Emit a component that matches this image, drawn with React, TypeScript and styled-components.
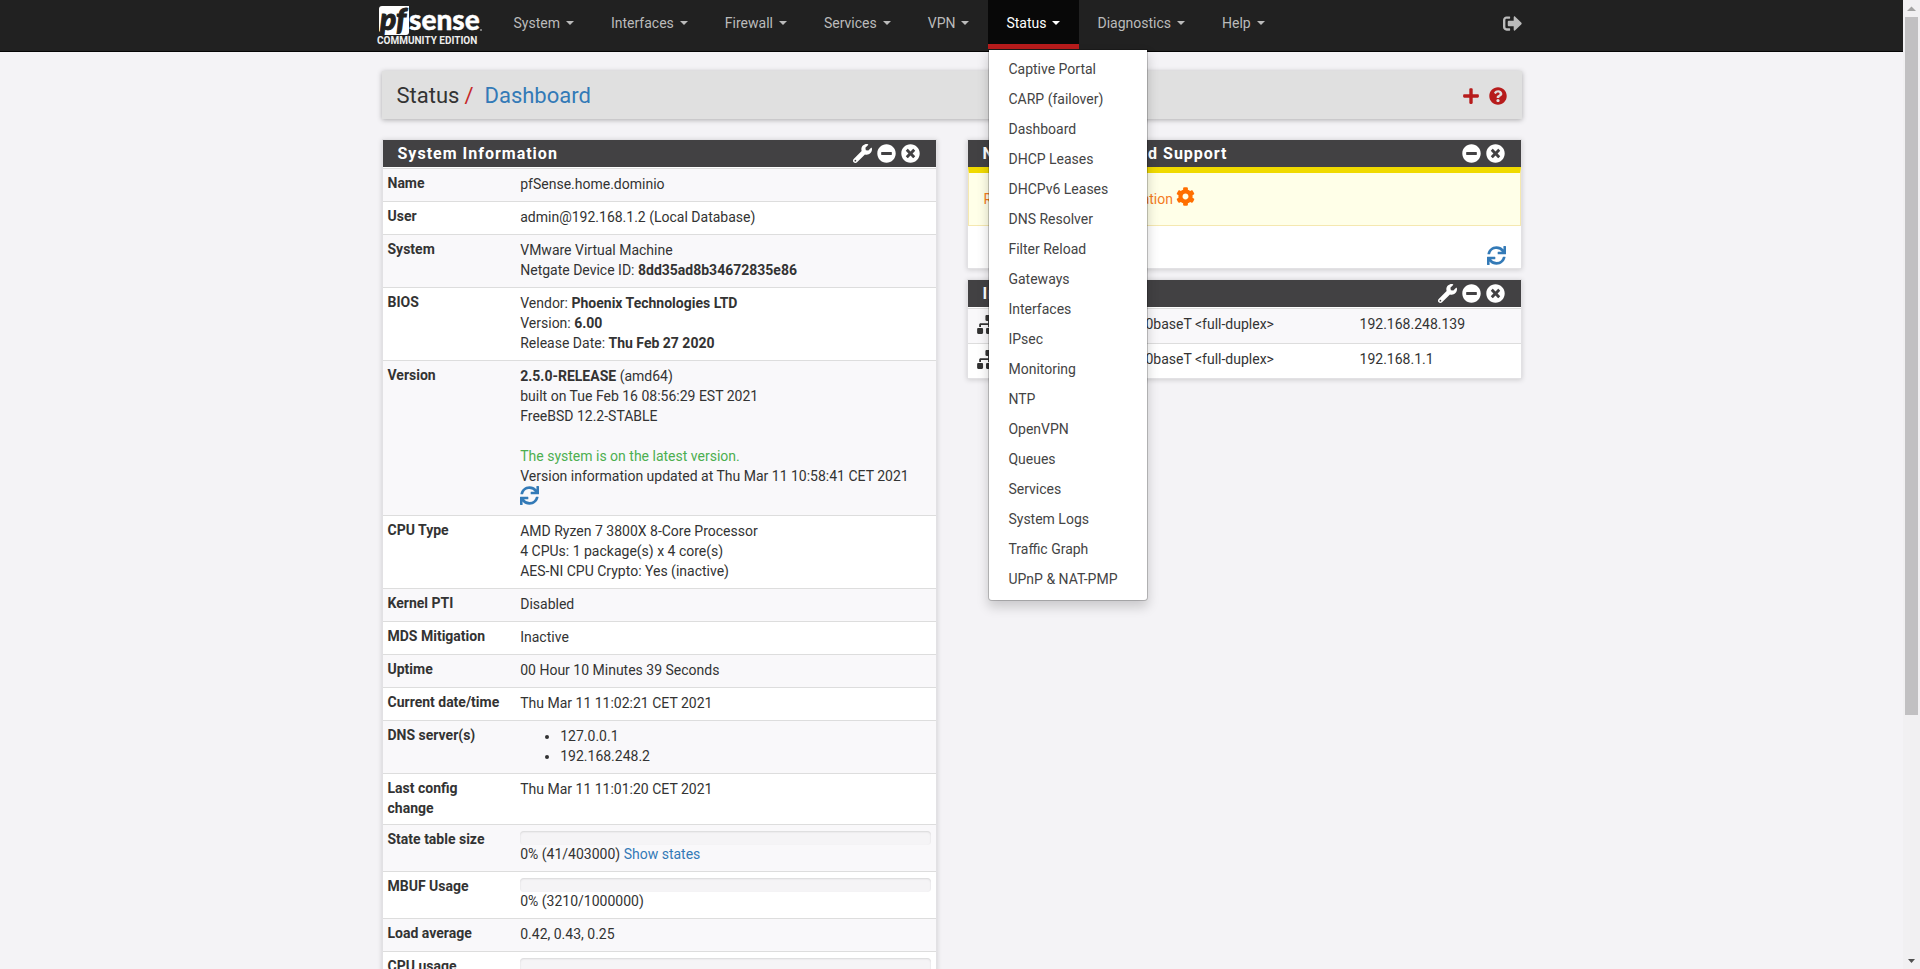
import React from "react";
import styled, { createGlobalStyle } from "styled-components";
import {
  FaCog,
  FaMinusCircle,
  FaPlus,
  FaQuestionCircle,
  FaSignOutAlt,
  FaSitemap,
  FaSync,
  FaTimesCircle,
  FaWrench,
} from "react-icons/fa";

const GlobalStyle = createGlobalStyle`
  *, *::before, *::after { box-sizing: border-box; }
  body {
    margin: 0;
    background: #f4f3f6;
    color: #333;
    font: 14px/20px Roboto, "Liberation Sans", sans-serif;
  }
  a { color: #337ab7; text-decoration: none; }
  button { padding: 0; border: 0; background: none; font: inherit; color: inherit; cursor: pointer; }
`;

const Window = styled.div`
  display: flex;
  height: 100vh;
  overflow: hidden;
`;

const Page = styled.div`
  flex: 1;
  min-width: 0;
  overflow: hidden;
`;

const ScrollTrack = styled.div`
  display: flex;
  flex-direction: column;
  width: 17px;
  padding: 0 2px;
  background: #f1f0f2;
`;

const ScrollArrow = styled.svg`
  width: 13px;
  height: 17px;
  flex: none;
`;

const ScrollThumb = styled.div`
  height: 72%;
  background: #c1c0c2;
`;

const ScrollSpace = styled.div`
  flex: 1;
`;

const NavBar = styled.nav`
  height: 52px;
  background: #212121;
  border-bottom: 1px solid #050505;
`;

const Container = styled.div`
  max-width: 1140px;
  margin: 0 auto;
`;

const NavRow = styled(Container)`
  display: flex;
  align-items: flex-start;
  height: 51px;
`;

const Brand = styled.a`
  flex: none;
  width: 120px;
  margin-left: -6px;
`;

const NavList = styled.ul`
  display: flex;
  flex: 1;
  margin: 0;
  padding: 0;
  list-style: none;
`;

const NavItem = styled.li`
  position: relative;
`;

const NavButton = styled.button<{ $open?: boolean }>`
  display: flex;
  align-items: center;
  gap: 6px;
  height: 49px;
  padding: 0 19px 3px 18px;
  color: ${(p) => (p.$open ? "#fff" : "#bbb")};
  background: ${(p) => (p.$open ? "#080808" : "transparent")};
  box-shadow: ${(p) => (p.$open ? "inset 0 -5px 0 #b71c1c" : "none")};
`;

const Caret = styled.span`
  border: 4px solid transparent;
  border-top-color: currentColor;
  border-bottom: 0;
`;

const Menu = styled.ul`
  position: absolute;
  z-index: 10;
  top: 49px;
  left: 0;
  min-width: 160px;
  margin: 0;
  padding: 5px 0;
  list-style: none;
  background: #fff;
  background-clip: padding-box;
  border: 1px solid rgba(0, 0, 0, 0.2);
  border-radius: 0 0 4px 4px;
  box-shadow: 0 6px 12px rgba(0, 0, 0, 0.175);
`;

const MenuLink = styled.a`
  display: block;
  padding: 4px 19px 6px;
  color: #444;
  white-space: nowrap;
`;

const Logout = styled.button`
  display: flex;
  height: 47px;
  align-items: center;
  color: #bbb;
`;

const PageHeader = styled.header`
  display: flex;
  align-items: center;
  justify-content: space-between;
  height: 48px;
  margin-top: 19px;
  padding: 2px 15px 0;
  background: #e0e0e0;
  box-shadow: 0 1px 5px rgba(0, 0, 0, 0.3);
`;

const Crumbs = styled.h1`
  display: flex;
  gap: 5px;
  margin: 0;
  font-size: 22px;
  font-weight: 400;
  line-height: 30px;
`;

const Slash = styled.span`
  color: #c62828;
  margin-right: 6px;
`;

const HeaderTools = styled.div`
  display: flex;
  gap: 9px;
  color: #b71c1c;
  button { display: flex; }
`;

const Columns = styled.main`
  display: grid;
  grid-template-columns: 1fr 1fr;
  gap: 30px;
  align-items: start;
  margin-top: 20px;
`;

const Stack = styled.div`
  display: grid;
  gap: 10px;
`;

const PanelBox = styled.section`
  background: #fff;
  border: 1px solid #e2e1e4;
  box-shadow: 0 1px 5px rgba(0, 0, 0, 0.16);
`;

const PanelHead = styled.header`
  display: flex;
  align-items: center;
  justify-content: space-between;
  height: 27px;
  padding: 0 16px 0 15px;
  color: #fff;
  background: #424143;
`;

const PanelTitle = styled.h2`
  margin: 0;
  font-size: 16px;
  font-weight: 700;
  letter-spacing: 1px;
`;

const PanelTools = styled.div`
  display: flex;
  gap: 5px;
  button { display: flex; }
`;

const InfoTable = styled.table`
  width: 100%;
  margin-top: 1px;
  border-collapse: separate;
  border-spacing: 0;
  table-layout: fixed;
  tr:nth-child(odd) { background: #f9f8fa; }
  th, td { border-top: 1px solid #ddd; vertical-align: top; text-align: left; }
  th { width: 24%; padding: 4px 15px 6px 5px; }
  td { padding: 5px 5px 7px; }
`;

const Green = styled.span`
  color: #4caf50;
`;

const RefreshButton = styled.button`
  display: block;
  height: 22px;
  margin: -2px 0 2px;
  color: #337ab7;
  svg { display: block; }
`;

const ServerList = styled.ul`
  margin: 0;
  padding-left: 40px;
`;

const Meter = styled.div`
  height: 14px;
  margin-top: 1px;
  margin-bottom: -1px;
  border-radius: 4px;
  background: #f5f4f6;
  box-shadow: inset 0 1px 2px rgba(0, 0, 0, 0.12);
`;

const Alert = styled.div`
  display: flex;
  gap: 3px;
  padding: 16px 15px;
  color: #f57c1f;
  background: #ffffe8;
  border: 1px solid #f5e8b0;
  border-top: 6px solid #f0da00;
  svg { color: #ff6f00; margin-top: -2px; }
`;

const PanelFoot = styled.div`
  display: flex;
  justify-content: flex-end;
  height: 42px;
  padding: 20px 15px 0 0;
`;

const PortTable = styled(InfoTable)`
  td { height: 35px; padding: 5px 5px 9px; }
  td:first-child { padding-left: 9px; }
`;

const PortLink = styled.a`
  display: flex;
  align-items: center;
  gap: 8px;
  height: 20px;
  color: #333;
  font-weight: 700;
  svg { width: 24px; height: 19px; }
`;

const NAV = ["System", "Interfaces", "Firewall", "Services", "VPN", "Status", "Diagnostics", "Help"];

const STATUS_MENU = [
  "Captive Portal", "CARP (failover)", "Dashboard", "DHCP Leases", "DHCPv6 Leases", "DNS Resolver",
  "Filter Reload", "Gateways", "Interfaces", "IPsec", "Monitoring", "NTP", "OpenVPN", "Queues",
  "Services", "System Logs", "Traffic Graph", "UPnP & NAT-PMP",
];

function Logo() {
  return (
    <svg width="114" height="50" viewBox="0 0 114 50" role="img" aria-label="pfSense Community Edition">
      <path d="M6 6H33V32a3 3 0 0 1-3 3H7L3 31V9a3 3 0 0 1 3-3Z" fill="#fff" />
      <text x="4" y="30" fill="#212121" stroke="#212121" strokeWidth="1" fontFamily="Lato, sans-serif" fontWeight="900" fontStyle="italic" fontSize="30">pf</text>
      <text x="33" y="30" fill="#fff" stroke="#fff" strokeWidth="0.4" fontFamily="Lato, sans-serif" fontWeight="900" fontSize="28">sense</text>
      <circle cx="105" cy="30" r="1" fill="#999" />
      <text x="1" y="44" fill="#eee" fontFamily="Roboto, sans-serif" fontWeight="700" fontSize="10">COMMUNITY EDITION</text>
    </svg>
  );
}

type PanelProps = { title: string; settings?: boolean; children: React.ReactNode };

function Panel({ title, settings, children }: PanelProps) {
  return (
    <PanelBox>
      <PanelHead>
        <PanelTitle>{title}</PanelTitle>
        <PanelTools>
          {settings && <button aria-label="Settings"><FaWrench size={19} /></button>}
          <button aria-label="Collapse"><FaMinusCircle size={19} /></button>
          <button aria-label="Close"><FaTimesCircle size={19} /></button>
        </PanelTools>
      </PanelHead>
      {children}
    </PanelBox>
  );
}

const INFO: [string, React.ReactNode][] = [
  ["Name", "pfSense.home.dominio"],
  ["User", "admin@192.168.1.2 (Local Database)"],
  ["System", <>VMware Virtual Machine<br />Netgate Device ID: <b>8dd35ad8b34672835e86</b></>],
  ["BIOS", <>Vendor: <b>Phoenix Technologies LTD</b><br />Version: <b>6.00</b><br />Release Date: <b>Thu Feb 27 2020</b></>],
  ["Version", <>
    <b>2.5.0-RELEASE</b> (amd64)<br />built on Tue Feb 16 08:56:29 EST 2021<br />FreeBSD 12.2-STABLE<br /><br />
    <Green>The system is on the latest version.</Green><br />
    Version information updated at Thu Mar 11 10:58:41 CET 2021
    <RefreshButton aria-label="Refresh version"><FaSync size={19} /></RefreshButton>
  </>],
  ["CPU Type", <>AMD Ryzen 7 3800X 8-Core Processor<br />4 CPUs: 1 package(s) x 4 core(s)<br />AES-NI CPU Crypto: Yes (inactive)</>],
  ["Kernel PTI", "Disabled"],
  ["MDS Mitigation", "Inactive"],
  ["Uptime", "00 Hour 10 Minutes 39 Seconds"],
  ["Current date/time", "Thu Mar 11 11:02:21 CET 2021"],
  ["DNS server(s)", <ServerList><li>127.0.0.1</li><li>192.168.248.2</li></ServerList>],
  ["Last config change", "Thu Mar 11 11:01:20 CET 2021"],
  ["State table size", <><Meter />0% (41/403000) <a href="#states">Show states</a></>],
  ["MBUF Usage", <><Meter />0% (3210/1000000)</>],
  ["Load average", "0.42, 0.43, 0.25"],
  ["CPU usage", <Meter />],
];

const PORTS = [
  ["WAN", "192.168.248.139"],
  ["LAN", "192.168.1.1"],
];

export default function App() {
  return (
    <Window>
      <GlobalStyle />
      <Page>
        <NavBar>
          <NavRow>
            <Brand href="#home"><Logo /></Brand>
            <NavList>
              {NAV.map((name) => (
                <NavItem key={name}>
                  <NavButton $open={name === "Status"} aria-expanded={name === "Status"}>
                    {name}<Caret />
                  </NavButton>
                  {name === "Status" && (
                    <Menu>
                      {STATUS_MENU.map((item) => (
                        <li key={item}><MenuLink href="#menu">{item}</MenuLink></li>
                      ))}
                    </Menu>
                  )}
                </NavItem>
              ))}
            </NavList>
            <Logout aria-label="Logout"><FaSignOutAlt size={19} /></Logout>
          </NavRow>
        </NavBar>
        <Container>
          <PageHeader>
            <Crumbs>Status <Slash>/</Slash><a href="#dashboard">Dashboard</a></Crumbs>
            <HeaderTools>
              <button aria-label="Add widget"><FaPlus size={18} /></button>
              <button aria-label="Help"><FaQuestionCircle size={18} /></button>
            </HeaderTools>
          </PageHeader>
          <Columns>
            <Panel title="System Information" settings>
              <InfoTable>
                <tbody>
                  {INFO.map(([label, value]) => (
                    <tr key={label}><th scope="row">{label}</th><td>{value}</td></tr>
                  ))}
                </tbody>
              </InfoTable>
            </Panel>
            <Stack>
              <Panel title="Netgate Services And Support">
                <Alert>Retrieving support information <FaCog size={19} /></Alert>
                <PanelFoot>
                  <RefreshButton aria-label="Refresh support"><FaSync size={19} /></RefreshButton>
                </PanelFoot>
              </Panel>
              <Panel title="Interfaces" settings>
                <PortTable>
                  <colgroup><col width="27%" /><col width="43%" /><col width="30%" /></colgroup>
                  <tbody>
                    {PORTS.map(([name, address]) => (
                      <tr key={name}>
                        <td><PortLink href="#port"><FaSitemap />{name}</PortLink></td>
                        <td>1000baseT &lt;full-duplex&gt;</td>
                        <td>{address}</td>
                      </tr>
                    ))}
                  </tbody>
                </PortTable>
              </Panel>
            </Stack>
          </Columns>
        </Container>
      </Page>
      <ScrollTrack aria-hidden="true">
        <ScrollArrow viewBox="0 0 13 17"><path d="M2 11 6.500 6.500 11 11Z" fill="#a3a3a3" /></ScrollArrow>
        <ScrollThumb />
        <ScrollSpace />
        <ScrollArrow viewBox="0 0 13 17"><path d="M3 7H10L6.500 11Z" fill="#505050" /></ScrollArrow>
      </ScrollTrack>
    </Window>
  );
}
